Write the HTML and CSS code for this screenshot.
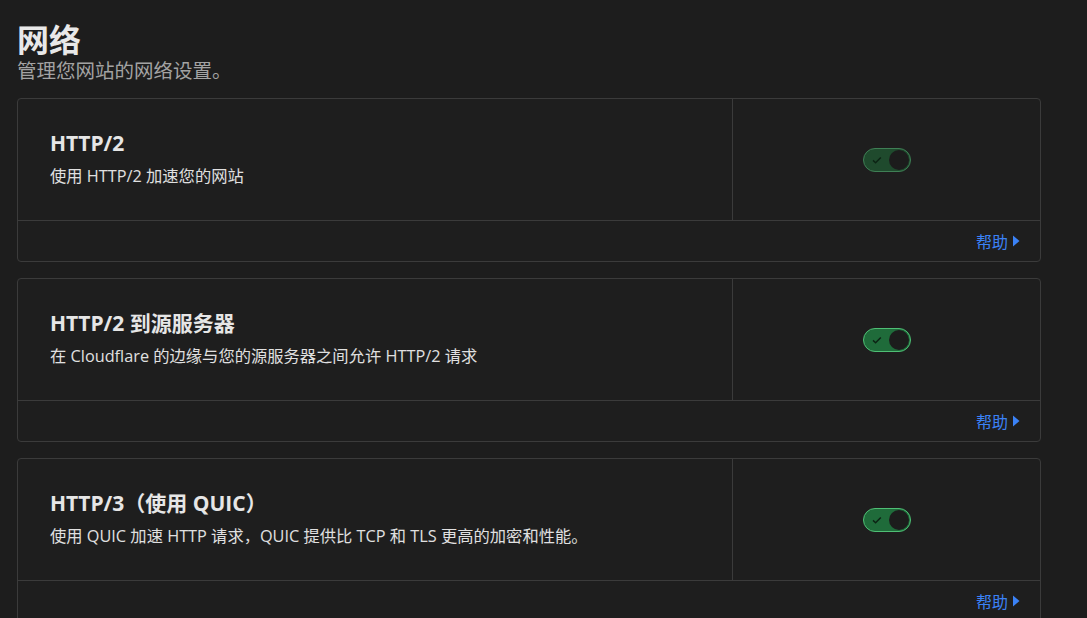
FILE: index.html
```html
<!DOCTYPE html>
<html lang="zh-CN">
<head>
<meta charset="utf-8">
<title>网络</title>
<link rel="stylesheet" href="styles.css">
</head>
<body>
<main class="page">
  <header class="head">
    <h1 class="title">网络</h1>
    <p class="subtitle">管理您网站的网络设置。</p>
  </header>

  <section class="card">
    <div class="card-main">
      <div class="card-text">
        <h2 class="card-title">HTTP/2</h2>
        <p class="card-desc">使用 HTTP/2 加速您的网站</p>
      </div>
      <div class="card-control">
        <span class="toggle toggle-dim"><svg class="check" viewBox="0 0 12 12" width="12" height="12"><path d="M2 6.4l2.6 2.4 5.2-5.4" fill="none" stroke="currentColor" stroke-width="1.5"/></svg><span class="knob"></span></span>
      </div>
    </div>
    <div class="card-foot"><a class="help" href="#">帮助<svg class="tri" viewBox="0 0 8 12" width="8" height="12"><path d="M1 0.5L7.5 6 1 11.5z" fill="currentColor"/></svg></a></div>
  </section>

  <section class="card">
    <div class="card-main">
      <div class="card-text">
        <h2 class="card-title">HTTP/2 到源服务器</h2>
        <p class="card-desc">在 Cloudflare 的边缘与您的源服务器之间允许 HTTP/2 请求</p>
      </div>
      <div class="card-control">
        <span class="toggle"><svg class="check" viewBox="0 0 12 12" width="12" height="12"><path d="M2 6.4l2.6 2.4 5.2-5.4" fill="none" stroke="currentColor" stroke-width="1.5"/></svg><span class="knob"></span></span>
      </div>
    </div>
    <div class="card-foot"><a class="help" href="#">帮助<svg class="tri" viewBox="0 0 8 12" width="8" height="12"><path d="M1 0.5L7.5 6 1 11.5z" fill="currentColor"/></svg></a></div>
  </section>

  <section class="card">
    <div class="card-main">
      <div class="card-text">
        <h2 class="card-title">HTTP/3（使用 QUIC）</h2>
        <p class="card-desc">使用 QUIC 加速 HTTP 请求，QUIC 提供比 TCP 和 TLS 更高的加密和性能。</p>
      </div>
      <div class="card-control">
        <span class="toggle"><svg class="check" viewBox="0 0 12 12" width="12" height="12"><path d="M2 6.4l2.6 2.4 5.2-5.4" fill="none" stroke="currentColor" stroke-width="1.5"/></svg><span class="knob"></span></span>
      </div>
    </div>
    <div class="card-foot"><a class="help" href="#">帮助<svg class="tri" viewBox="0 0 8 12" width="8" height="12"><path d="M1 0.5L7.5 6 1 11.5z" fill="currentColor"/></svg></a></div>
  </section>
</main>
</body>
</html>
```

FILE: styles.css
```css
* { box-sizing: border-box; }
html, body { margin: 0; padding: 0; }
body {
  background: #1d1d1d;
  color: #e6e6e6;
  font-family: "Open Sans", "Noto Sans CJK SC", sans-serif;
  overflow: hidden;
  height: 618px;
}
.page {
  padding: 19px 46px 0 17px;
  display: flex;
  flex-direction: column;
  gap: 16px;
}
.head {
  display: flex;
  flex-direction: column;
  gap: 1px;
  margin-bottom: 0;
}
.title {
  margin: 0;
  font-family: "Noto Sans CJK SC", sans-serif;
  font-size: 32px;
  line-height: 38px;
  font-weight: 700;
  color: #e8e8e8;
}
.subtitle {
  margin: 0;
  font-family: "Noto Sans CJK SC", sans-serif;
  font-size: 19.5px;
  line-height: 24px;
  color: #a3a3a3;
}
.card {
  border: 1px solid #3b3b3b;
  border-radius: 4px;
  background: #1e1e1e;
  display: flex;
  flex-direction: column;
}
.card-main {
  display: flex;
  height: 122px;
  border-bottom: 1px solid #3b3b3b;
}
.card-text {
  flex: 1;
  padding: 30px 32px 0 32px;
  border-right: 1px solid #3b3b3b;
}
.card-title {
  margin: 0;
  font-size: 21px;
  line-height: 28px;
  font-weight: 700;
  color: #e6e6e6;
}
.card-desc {
  margin: 8px 0 0;
  font-size: 16.3px;
  line-height: 22px;
  color: #e0e0e0;
}
.card-control {
  width: 307px;
  display: flex;
  align-items: center;
  justify-content: center;
  padding-top: 1px;
}
.toggle {
  width: 48px;
  height: 24px;
  border-radius: 12px;
  background: #1f6b3a;
  border: 1px solid #4fbf75;
  display: flex;
  align-items: center;
  justify-content: space-between;
  padding: 0 1px 0 7px;
  color: #0c2414;
}
.toggle-dim {
  background: #1f4a2d;
  border-color: #3f7f55;
}
.check { display: block; }
.knob {
  width: 20px;
  height: 20px;
  border-radius: 50%;
  background: #1c1c1c;
}
.card-foot {
  height: 40px;
  display: flex;
  align-items: center;
  justify-content: flex-end;
  padding-right: 20px;
}
.help {
  color: #3b82f6;
  text-decoration: none;
  font-family: "Noto Sans CJK SC", sans-serif;
  font-size: 16px;
  display: flex;
  align-items: center;
  gap: 4px;
}
.tri { display: block; }
```
